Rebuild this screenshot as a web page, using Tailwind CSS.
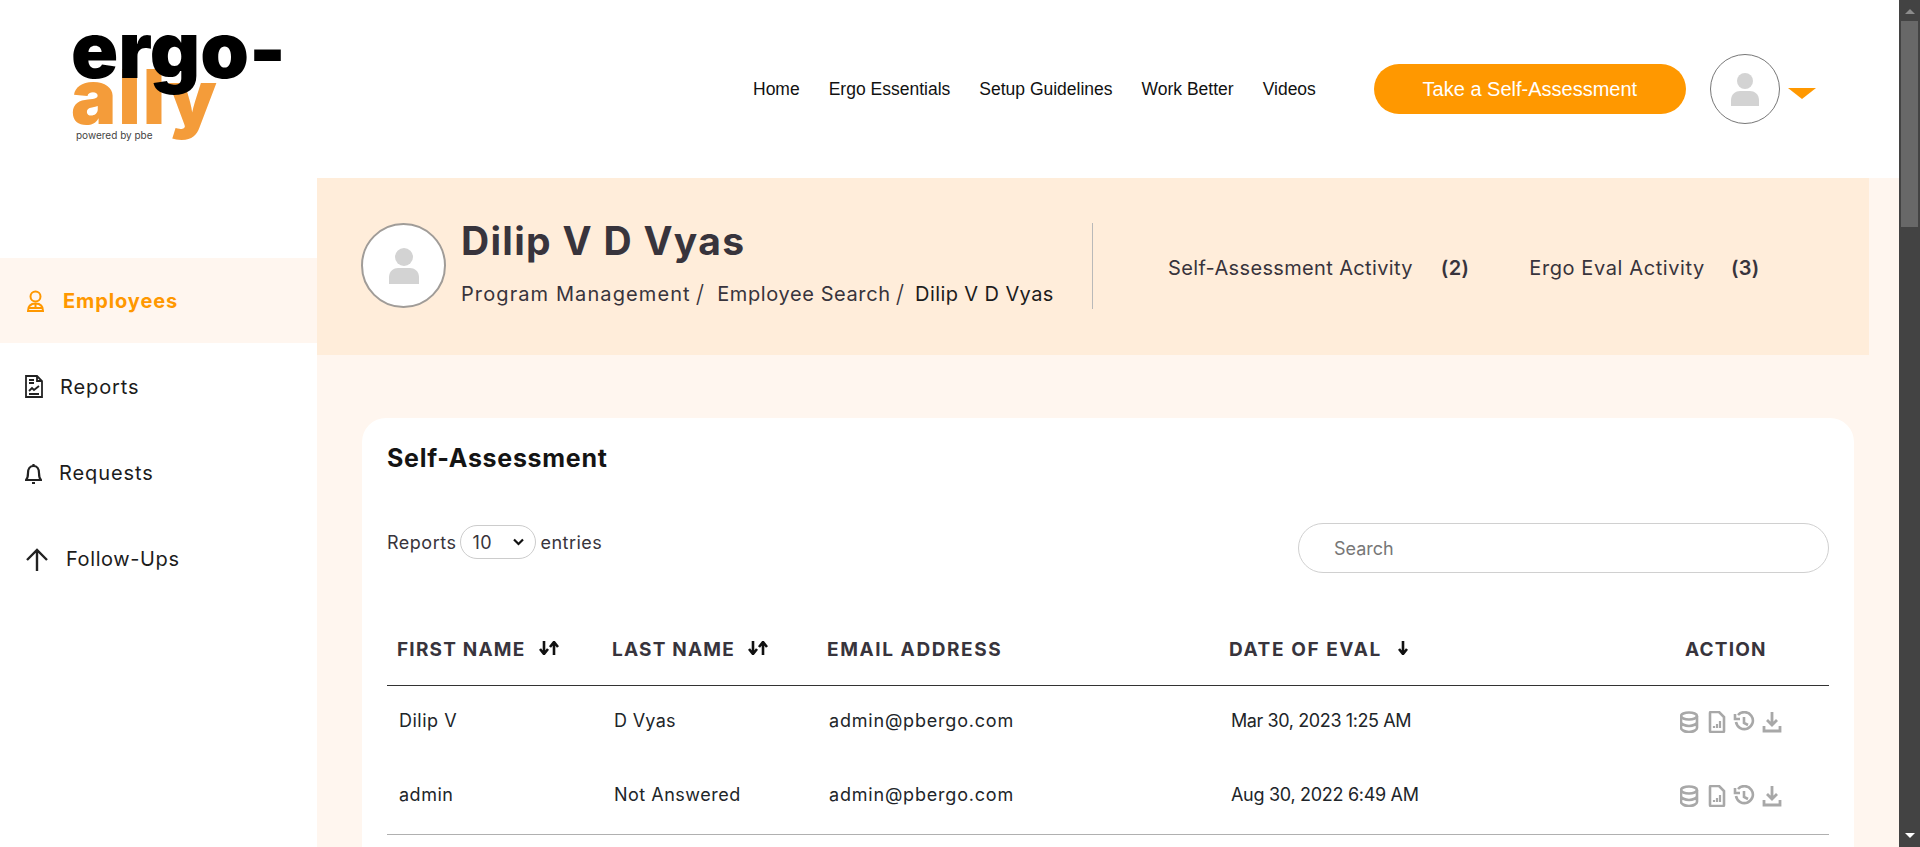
<!DOCTYPE html>
<html lang="en">
<head>
    <meta charset="UTF-8">
    <meta name="viewport" content="width=device-width, initial-scale=1.0">
    <title>Ergo-Ally Employee</title>
    <script src="https://cdn.jsdelivr.net/npm/@tailwindcss/browser@4"></script>
</head>
<body class="bg-white text-[#212529] font-['Inter',sans-serif] h-screen overflow-hidden flex">

    <div class="w-[1899px] h-[847px] overflow-hidden">

        <!-- Top bar -->
        <header class="h-[178px] flex items-start font-['Liberation_Sans',sans-serif]">
            <div class="relative w-[753px] h-[178px] shrink-0">
                <span class="absolute left-[71px] top-[58px] text-[76px] leading-none font-black tracking-[2px] text-[#f49c3a] font-['Inter',sans-serif]">ally</span>
                <span class="absolute left-[71px] top-[11px] text-[78px] leading-none font-black text-black font-['Inter',sans-serif]">ergo-</span>
                <span class="absolute left-[76px] top-[129px] text-[10px] leading-[13px] text-[#444] font-['Inter',sans-serif]">powered by pbe</span>
            </div>
            <nav class="flex items-center gap-[29px] h-[178px] text-[17.5px] text-[#111]">
                <a>Home</a>
                <a>Ergo Essentials</a>
                <a>Setup Guidelines</a>
                <a>Work Better</a>
                <a>Videos</a>
            </nav>
            <button class="ml-[58px] mt-[64px] w-[312px] h-[50px] rounded-full bg-[#ff9800] text-white text-[20px]">Take a Self-Assessment</button>
            <div class="ml-[24px] mt-[54px] w-[70px] h-[70px] rounded-full border border-[#777] flex items-center justify-center">
                <svg class="w-[30px] h-[34px]" viewBox="0 0 30 34" fill="#d3d3d3"><circle cx="15" cy="9" r="8"/><path d="M1 34v-6c0-6 5-9 9-9h10c4 0 9 3 9 9v6z"/></svg>
            </div>
            <svg class="ml-[8px] mt-[88px] w-[28px] h-[11px]" viewBox="0 0 28 11" fill="#ff9800"><path d="M0 0h28L14 11z"/></svg>
        </header>

        <div class="flex h-[669px]">

            <!-- Sidebar -->
            <aside class="w-[317px] shrink-0 pt-[80px] text-[20px] text-[#1c1c1c] tracking-[.9px]">
                <a class="flex items-center h-[85px] pl-[27px] gap-[19px] bg-[#fff6ef] text-[#ff9800] font-bold">
                    <svg class="w-[17px] h-[22px]" viewBox="0 0 17 22" fill="none" stroke="#ff9800" stroke-width="2"><circle cx="8.500" cy="6.500" r="5"/><path d="M1 21c0-5 3-7.500 7.500-7.500S16 16 16 21zM1 18h15M8.500 14v4"/></svg>
                    Employees
                </a>
                <a class="flex items-center h-[87px] pl-[25px] gap-[17px]">
                    <svg class="w-[18px] h-[23px]" viewBox="0 0 18 23" fill="none" stroke="#222" stroke-width="1.800"><path d="M1 1h11l5 5v16H1zM12 1v5h5M4 5h5M4 8h5M4 19h10"/><path d="M4 16l3-3 2 2 5-4"/></svg>
                    Reports
                </a>
                <a class="flex items-center h-[86px] pl-[25px] gap-[17px]">
                    <svg class="w-[17px] h-[21px]" viewBox="0 0 17 21" fill="none" stroke="#222" stroke-width="2.200"><path d="M1 17c2-2 2-4 2-7 0-4 2-7 5.500-7S14 6 14 10c0 3 0 5 2 7z"/><path d="M8.500 1v2M7 20h3"/></svg>
                    Requests
                </a>
                <a class="flex items-center h-[86px] pl-[26px] gap-[18px] tracking-[.6px]">
                    <svg class="w-[22px] h-[23px]" viewBox="0 0 22 23" fill="none" stroke="#222" stroke-width="2.400"><path d="M11 23V2M1 12L11 2l10 10"/></svg>
                    Follow-Ups
                </a>
            </aside>

            <!-- Main -->
            <main class="flex-1 bg-[#fff6ef]">
                <section class="w-[1552px] h-[177px] bg-[#ffedda] flex items-start">
                    <div class="ml-[44px] mt-[45px] w-[85px] h-[85px] rounded-full bg-white border-2 border-[#a09c98] flex items-center justify-center">
                        <svg class="w-[32px] h-[36px]" viewBox="0 0 32 36" fill="#d3d3d3"><circle cx="16" cy="9" r="9"/><path d="M1 36v-7c0-6 5-9 9-9h12c4 0 9 3 9 9v7z"/></svg>
                    </div>
                    <div class="ml-[15px] mt-[40px] w-[631px] text-[#38343c]">
                        <h1 class="text-[39px] leading-[46px] font-bold tracking-[1.300px]">Dilip V D Vyas</h1>
                        <div class="mt-[17px] flex items-center text-[20px] leading-[26px] tracking-[1.100px] whitespace-nowrap">
                            <span>Program Management</span>
                            <span class="ml-[5px] text-[24px] font-light">/</span>
                            <span class="ml-[12px] tracking-[.600px]">Employee Search</span>
                            <span class="ml-[5px] text-[24px] font-light">/</span>
                            <span class="ml-[10px] tracking-[.400px] text-[#1c1c1c]">Dilip V D Vyas</span>
                        </div>
                    </div>
                    <div class="mt-[45px] h-[86px] border-l border-[#b9b9b9] flex items-center pl-[75px] pt-[4px] text-[20px] text-[#38343c] tracking-[.350px] whitespace-nowrap">
                        <span>Self-Assessment Activity</span>
                        <b class="ml-[28px] font-semibold">(2)</b>
                        <span class="ml-[60px] tracking-[.600px]">Ergo Eval Activity</span>
                        <b class="ml-[26px] font-semibold">(3)</b>
                    </div>
                </section>

                <!-- Self-assessment card -->
                <section class="mt-[63px] ml-[45px] w-[1492px] h-[480px] bg-white rounded-[24px] px-[25px] pt-[25px]">
                    <h2 class="text-[25px] leading-[30px] font-bold text-[#141414] tracking-[.700px]">Self-Assessment</h2>
                    <div class="mt-[50px] flex justify-between items-start">
                        <div class="mt-[2px] flex items-center text-[18px] text-[#38343c] h-[34px] tracking-[.500px]">
                            Reports
                            <div class="relative ml-[4px] w-[76px] h-[34px]">
                                <select class="appearance-none w-full h-full rounded-full border border-[#ccc] bg-white pl-[11px] text-[18px]"><option>10</option></select>
                                <svg class="absolute right-[12px] top-[13px] w-[11px] h-[8px]" viewBox="0 0 11 8" fill="none" stroke="#111" stroke-width="2.200"><path d="M1 1.500l4.500 4.500L10 1.500"/></svg>
                            </div>
                            <span class="ml-[4px]">entries</span>
                        </div>
                        <input class="w-[531px] h-[50px] rounded-full border border-[#d0d0d0] px-[35px] text-[18px] placeholder:text-[#777]" placeholder="Search">
                    </div>
                    <table class="mt-[42px] w-[1442px] table-fixed text-left">
                        <thead>
                            <tr class="h-[70px] border-b border-[#333] text-[19px] text-[#38343c]">
                                <th class="w-[215px] pl-[10px] pt-[1px] font-bold tracking-[1.200px]">FIRST NAME<svg class="inline ml-[13px] mb-[6px] w-[20px] h-[14px]" viewBox="0 0 20 14" fill="none" stroke="#111" stroke-width="2.600"><path d="M5 0v11M1 8l4 5 4-5M15 14V3M11 6l4-5 4 5"/></svg></th>
                                <th class="w-[215px] pl-[10px] pt-[1px] font-bold tracking-[1.200px]">LAST NAME<svg class="inline ml-[13px] mb-[6px] w-[20px] h-[14px]" viewBox="0 0 20 14" fill="none" stroke="#111" stroke-width="2.600"><path d="M5 0v11M1 8l4 5 4-5M15 14V3M11 6l4-5 4 5"/></svg></th>
                                <th class="w-[402px] pl-[10px] pt-[1px] font-bold tracking-[1.600px]">EMAIL ADDRESS</th>
                                <th class="w-[456px] pl-[10px] pt-[1px] font-bold tracking-[1.600px]">DATE OF EVAL<svg class="inline ml-[16px] mb-[6px] w-[10px] h-[14px]" viewBox="0 0 10 14" fill="none" stroke="#111" stroke-width="2.600"><path d="M5 0v11M1 8l4 5 4-5"/></svg></th>
                                <th class="pl-[10px] pt-[1px] font-bold tracking-[1.200px]">ACTION</th>
                            </tr>
                        </thead>
                        <tbody class="text-[18px] text-[#212529] tracking-[.500px]">
                            <tr class="h-[73px]">
                                <td class="pl-[12px] pb-[2px]">Dilip V</td>
                                <td class="pl-[12px] pb-[2px] tracking-[.3px]">D Vyas</td>
                                <td class="pl-[12px] pb-[2px] tracking-[.800px]">admin@pbergo.com</td>
                                <td class="pl-[12px] pb-[2px] tracking-[-.400px]">Mar 30, 2023 1:25 AM</td>
                                <td class="pl-[5px]">
                                    <svg class="w-[102px] h-[22px]" viewBox="0 0 102 22" fill="none" stroke="#a8a8a8" stroke-width="2.600">
                                        <ellipse cx="9" cy="5" rx="8" ry="3.500"/><path d="M1 5v12c0 2 4 4 8 4s8-2 8-4V5M1 11c0 2 4 4 8 4s8-2 8-4"/>
                                        <path d="M31 1h8l5 5v14a1 1 0 0 1-1 1H31a1 1 0 0 1-1-1V2a1 1 0 0 1 1-1z"/><path d="M34 17v-2M37 17v-4M40 17v-7" stroke-width="2.200"/>
                                        <path d="M58 4a8.500 8.500 0 1 1-2 7M55 3v5h5M64 6v6l4 2"/>
                                        <path d="M92 1v13M87 9l5 5 5-5M84 15v5h16v-5" stroke-width="2.800"/>
                                    </svg>
                                </td>
                            </tr>
                            <tr class="h-[76px] border-b border-[#b0b0b0]">
                                <td class="pl-[12px] pb-[3px]">admin</td>
                                <td class="pl-[12px] pb-[3px]">Not Answered</td>
                                <td class="pl-[12px] pb-[3px] tracking-[.800px]">admin@pbergo.com</td>
                                <td class="pl-[12px] pb-[3px] tracking-[-.300px]">Aug 30, 2022 6:49 AM</td>
                                <td class="pl-[5px]">
                                    <svg class="w-[102px] h-[22px]" viewBox="0 0 102 22" fill="none" stroke="#a8a8a8" stroke-width="2.600">
                                        <ellipse cx="9" cy="5" rx="8" ry="3.500"/><path d="M1 5v12c0 2 4 4 8 4s8-2 8-4V5M1 11c0 2 4 4 8 4s8-2 8-4"/>
                                        <path d="M31 1h8l5 5v14a1 1 0 0 1-1 1H31a1 1 0 0 1-1-1V2a1 1 0 0 1 1-1z"/><path d="M34 17v-2M37 17v-4M40 17v-7" stroke-width="2.200"/>
                                        <path d="M58 4a8.500 8.500 0 1 1-2 7M55 3v5h5M64 6v6l4 2"/>
                                        <path d="M92 1v13M87 9l5 5 5-5M84 15v5h16v-5" stroke-width="2.800"/>
                                    </svg>
                                </td>
                            </tr>
                        </tbody>
                    </table>
                </section>
            </main>
        </div>
    </div>

    <!-- Scrollbar drawn as in the screenshot -->
    <div class="w-[21px] h-[847px] bg-[#434343] flex flex-col items-center shrink-0">
        <svg class="mt-[9px] w-[10px] h-[5px]" viewBox="0 0 10 5" fill="#8c8c8c"><path d="M5 0l5 5H0z"/></svg>
        <div class="mt-[7px] w-[17px] h-[206px] bg-[#686868]"></div>
        <svg class="mt-[606px] w-[10px] h-[5px]" viewBox="0 0 10 5" fill="#fff"><path d="M0 0h10L5 5z"/></svg>
    </div>

</body>
</html>
